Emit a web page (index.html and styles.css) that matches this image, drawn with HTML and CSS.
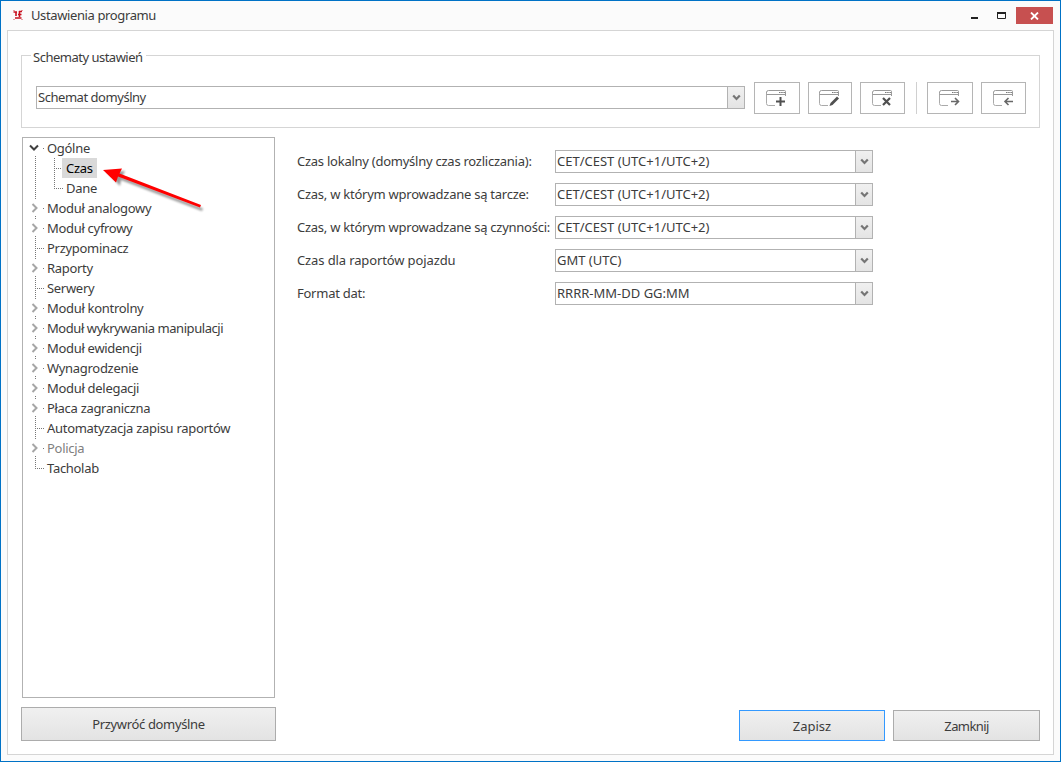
FILE: index.html
```html
<!DOCTYPE html>
<html lang="pl">
<head>
    <meta charset="UTF-8">
    <meta name="viewport" content="width=device-width, initial-scale=1.0">
    <title>Ustawienia programu</title>
    <link rel="stylesheet" href="styles.css">
</head>
<body>
    <svg class="defs" width="0" height="0">
        <symbol id="window" viewBox="0 0 22 18">
            <path d="M9 16.500H2.500Q.5 16.500 .5 14.500V3" fill="none" stroke="#aaa"/>
            <path d="M.5 4V3.500Q.5 1.500 2.500 1.500H18.500Q19.500 1.500 19.500 2.500V7M.5 5.500H19" fill="none" stroke="#999"/>
            <path d="M13 3.500H19" stroke="#777" stroke-dasharray="1.500 .7"/>
        </symbol>
        <symbol id="down" viewBox="0 0 9 8">
            <path d="M1.200 1.500L4.500 5L7.800 1.500" fill="none" stroke="#757575" stroke-width="2.200"/>
        </symbol>
        <symbol id="closed" viewBox="0 0 8 10">
            <path d="M1.500 1L5.500 5L1.500 9" fill="none" stroke="#a6a6a6" stroke-width="2"/>
        </symbol>
    </svg>

    <div class="window">
        <header class="titlebar">
            <svg class="app-icon" width="10" height="10" viewBox="0 0 10 10">
                <path d="M0 .5H2M8 .5H10M0 9.500H2M8 9.500H10" stroke="#e7a0a6"/>
                <path d="M.5 2H4M3 2V6M6.500 1V7M6 1.500H9M5 4.500H8.500M2 8H8.500" fill="none" stroke="#c8101e" stroke-width="1.600"/>
            </svg>
            <h1>Ustawienia programu</h1>
            <div class="controls">
                <svg width="8" height="12" viewBox="0 0 8 12"><path d="M0 11H7" stroke="#222" stroke-width="2"/></svg>
                <svg class="max" width="9" height="7" viewBox="0 0 9 7"><path d="M.5 0V6.500H8.500V0" fill="none" stroke="#222"/><path d="M0 1H9" stroke="#222" stroke-width="2"/></svg>
                <span class="close"><svg width="9" height="8" viewBox="0 0 9 8"><path d="M1 .5L8 7.500M8 .5L1 7.500" stroke="#fff" stroke-width="1.800"/></svg></span>
            </div>
        </header>

        <main class="client">
            <fieldset class="schemes">
                <legend>Schematy ustawień</legend>
                <div class="combo scheme-combo"><span>Schemat domyślny</span><i><svg width="9" height="8"><use href="#down"/></svg></i></div>
                <div class="tools">
                    <button class="tool"><svg width="22" height="18" viewBox="0 0 22 18"><use href="#window"/><path d="M10 12H20V18H10Z" fill="#fff"/><path d="M10 12.500H19M14.500 8V17" stroke="#505050" stroke-width="2"/></svg></button>
                    <button class="tool t2"><svg width="22" height="18" viewBox="0 0 22 18"><use href="#window"/><path d="M10 18L22 6V18Z" fill="#fff"/><path d="M10.500 17L11.500 14L18 7.500L20 9.500L13.500 16Z" fill="#505050"/></svg></button>
                    <button class="tool t3"><svg width="22" height="18" viewBox="0 0 22 18"><use href="#window"/><path d="M10 8H22V18H10Z" fill="#fff"/><path d="M11 9L18 16M18 9L11 16" stroke="#505050" stroke-width="2.200"/></svg></button>
                    <span class="separator"></span>
                    <button class="tool"><svg width="22" height="18" viewBox="0 0 22 18"><use href="#window"/><path d="M11 9H22V18H11Z" fill="#fff"/><path d="M12 12.500H20M16 9L19.500 12.500L16 16" fill="none" stroke="#686868" stroke-width="1.600"/></svg></button>
                    <button class="tool t5"><svg width="22" height="18" viewBox="0 0 22 18"><use href="#window"/><path d="M11 9H22V18H11Z" fill="#fff"/><path d="M20 12.500H12.500M15.500 9L12 12.500L15.500 16" fill="none" stroke="#686868" stroke-width="1.600"/></svg></button>
                </div>
            </fieldset>

            <div class="content">
                <aside class="sidebar">
                    <ul class="tree">
                        <li class="parent first"><b><svg width="10" height="8" viewBox="0 0 10 8"><path d="M1 1.500L5 5.500L9 1.500" fill="none" stroke="#404040" stroke-width="2"/></svg></b><span>Ogólne</span></li>
                        <li class="child"><b></b><em></em><span class="selected">Czas</span></li>
                        <li class="child end"><b></b><em></em><span>Dane</span></li>
                        <li class="parent"><b><svg width="8" height="10"><use href="#closed"/></svg></b><span>Moduł analogowy</span></li>
                        <li class="parent"><b><svg width="8" height="10"><use href="#closed"/></svg></b><span>Moduł cyfrowy</span></li>
                        <li><b></b><span>Przypominacz</span></li>
                        <li class="parent"><b><svg width="8" height="10"><use href="#closed"/></svg></b><span>Raporty</span></li>
                        <li><b></b><span>Serwery</span></li>
                        <li class="parent"><b><svg width="8" height="10"><use href="#closed"/></svg></b><span>Moduł kontrolny</span></li>
                        <li class="parent"><b><svg width="8" height="10"><use href="#closed"/></svg></b><span class="tight">Moduł wykrywania manipulacji</span></li>
                        <li class="parent"><b><svg width="8" height="10"><use href="#closed"/></svg></b><span>Moduł ewidencji</span></li>
                        <li class="parent"><b><svg width="8" height="10"><use href="#closed"/></svg></b><span>Wynagrodzenie</span></li>
                        <li class="parent"><b><svg width="8" height="10"><use href="#closed"/></svg></b><span>Moduł delegacji</span></li>
                        <li class="parent"><b><svg width="8" height="10"><use href="#closed"/></svg></b><span>Płaca zagraniczna</span></li>
                        <li><b></b><span>Automatyzacja zapisu raportów</span></li>
                        <li class="parent disabled"><b><svg width="8" height="10"><use href="#closed"/></svg></b><span>Policja</span></li>
                        <li class="last"><b></b><span>Tacholab</span></li>
                    </ul>
                    <svg class="arrow" width="112" height="52" viewBox="0 0 112 52">
                        <g class="arrow-shadow"><path d="M3 5L21 4L18 10L99 41.500L98 44L17 13L16 19Z"/></g>
                        <path d="M2 5L21 3.500L18.500 8.500L100 40L99 42.500L17 11.500L15 17.500Z" fill="#f00"/>
                    </svg>
                    <button class="btn restore">Przywróć domyślne</button>
                </aside>

                <section class="settings">
                    <div class="form">
                        <label>Czas lokalny (domyślny czas rozliczania):</label>
                        <div class="combo"><span>CET/CEST (UTC+1/UTC+2)</span><i><svg width="9" height="8"><use href="#down"/></svg></i></div>
                        <label>Czas, w którym wprowadzane są tarcze:</label>
                        <div class="combo"><span>CET/CEST (UTC+1/UTC+2)</span><i><svg width="9" height="8"><use href="#down"/></svg></i></div>
                        <label>Czas, w którym wprowadzane są czynności:</label>
                        <div class="combo"><span>CET/CEST (UTC+1/UTC+2)</span><i><svg width="9" height="8"><use href="#down"/></svg></i></div>
                        <label class="loose">Czas dla raportów pojazdu</label>
                        <div class="combo"><span>GMT (UTC)</span><i><svg width="9" height="8"><use href="#down"/></svg></i></div>
                        <label>Format dat:</label>
                        <div class="combo"><span>RRRR-MM-DD GG:MM</span><i><svg width="9" height="8"><use href="#down"/></svg></i></div>
                    </div>
                    <div class="actions">
                        <button class="btn primary">Zapisz</button>
                        <button class="btn cancel">Zamknij</button>
                    </div>
                </section>
            </div>
        </main>
    </div>
</body>
</html>
```
FILE: styles.css
```css
* {
    box-sizing: border-box;
}

body {
    margin: 0;
    font: 13px/20px "Noto Sans", "Open Sans", sans-serif;
    color: #3c3c3c;
    overflow: hidden;
}

button {
    font: inherit;
    color: inherit;
    padding: 0;
}

svg {
    display: block;
    flex: none;
}

.defs {
    display: none;
}

/* Okno */
.window {
    height: 762px;
    width: 1061px;
    padding: 0 6px 6px;
    border: 1px solid #0072c6;
    background: #fbfbfb;
}

.titlebar {
    display: flex;
    height: 29px;
    padding-left: 6px;
}

.app-icon {
    margin-top: 9px;
}

h1 {
    margin: 4px 0 0 8px;
    font-size: 13px;
    font-weight: normal;
    letter-spacing: -.38px;
}

.controls {
    display: flex;
    margin-left: auto;
}

.controls > svg {
    margin: 6px 18px 0 0;
}

.controls > .max {
    margin: 11px 10px 0 0;
}

.close {
    display: flex;
    align-items: center;
    justify-content: center;
    width: 37px;
    height: 17px;
    margin: 6px 1px 0 0;
    background: #c75050;
}

.client {
    height: 725px;
    padding: 14px 13px 13px;
    border: 1px solid #d5d5d5;
    background: #fff;
}

/* Schematy */
.schemes {
    display: flex;
    height: 83px;
    min-width: 0;
    margin: 0;
    padding: 17px 13px 0 14px;
    border: 1px solid #d5d5d5;
}

.schemes legend {
    height: 20px;
    padding: 0 3px 0 2px;
    margin-left: -5px;
    line-height: 24px;
    letter-spacing: -.5px;
}

.combo {
    display: flex;
    height: 23px;
    border: 1px solid #b2b2b2;
    background: #fff;
}

.combo span {
    flex: 1;
    padding-left: 1px;
    white-space: nowrap;
}

.combo i {
    display: flex;
    align-items: center;
    justify-content: center;
    width: 17px;
    border-left: 1px solid #b2b2b2;
    background: linear-gradient(#f0f0f0, #e4e4e4);
}

.scheme-combo {
    width: 709px;
    margin-top: 4px;
    letter-spacing: -.46px;
}

.tools {
    display: flex;
    margin-left: 9px;
}

.tool {
    display: flex;
    align-items: center;
    justify-content: center;
    width: 46px;
    height: 32px;
    border: 1px solid #b5b5b5;
    background: #fff;
}

.t2 {
    width: 44px;
    margin: 0 8px;
}

.t3 {
    width: 45px;
}

.t5 {
    width: 45px;
    margin-left: 8px;
}

.separator {
    width: 1px;
    height: 32px;
    margin: 0 10px 0 11px;
    background: #d0d0d0;
}

.content {
    display: flex;
    height: 613px;
    padding-top: 9px;
}

/* Drzewo */
.sidebar {
    position: relative;
    width: 255px;
}

.tree {
    width: 253px;
    height: 561px;
    margin: 0 0 0 1px;
    padding: 0;
    list-style: none;
    border: 1px solid #b2b2b2;
    letter-spacing: -.3px;
}

.tree li {
    display: flex;
    height: 20px;
    white-space: nowrap;
}

.tree b {
    width: 9px;
    height: 20px;
    margin-left: 12px;
    background:
        repeating-linear-gradient(90deg, #777 0 1px, transparent 1px 2px) 0 10px / 9px 1px no-repeat,
        repeating-linear-gradient(#777 0 1px, transparent 1px 2px) 0 0 / 1px 20px no-repeat;
}

.tree .parent b {
    background:
        linear-gradient(#777, #777) 8px 10px / 1px 1px no-repeat,
        linear-gradient(#777, #777) 0 0 / 1px 1px no-repeat,
        linear-gradient(#777, #777) 0 18px / 1px 1px no-repeat;
}

.tree .first b {
    background:
        linear-gradient(#777, #777) 8px 10px / 1px 1px no-repeat,
        linear-gradient(#777, #777) 0 18px / 1px 1px no-repeat;
}

.tree .child b {
    background: repeating-linear-gradient(#777 0 1px, transparent 1px 2px) 0 0 / 1px 20px no-repeat;
}

.tree .last b {
    background:
        repeating-linear-gradient(90deg, #777 0 1px, transparent 1px 2px) 0 10px / 9px 1px no-repeat,
        repeating-linear-gradient(#777 0 1px, transparent 1px 2px) 0 0 / 1px 11px no-repeat;
}

.tree b svg {
    margin: 5px 0 0 -4px;
}

.tree .first svg {
    margin: 6px 0 0 -6px;
}

.tree span {
    padding-left: 3px;
}

.tree .tight {
    letter-spacing: -.43px;
}

.tree em {
    width: 9px;
    margin-left: 10px;
    background:
        repeating-linear-gradient(90deg, #777 0 1px, transparent 1px 2px) 0 10px / 9px 1px no-repeat,
        repeating-linear-gradient(#777 0 1px, transparent 1px 2px) 0 0 / 1px 20px no-repeat;
}

.tree .end em {
    background:
        repeating-linear-gradient(90deg, #777 0 1px, transparent 1px 2px) 0 10px / 9px 1px no-repeat,
        repeating-linear-gradient(#777 0 1px, transparent 1px 2px) 0 0 / 1px 11px no-repeat;
}

.tree .child span {
    margin-left: -1px;
    padding: 0 4px;
}

.tree .selected {
    color: #000;
    background: #d9d9d9;
}

.tree .disabled {
    color: #808080;
}

/* Strzałka nad drzewem */
.arrow {
    position: absolute;
    left: 80px;
    top: 28px;
}

.arrow-shadow {
    fill: #000;
    opacity: .4;
    filter: blur(1.2px);
    transform: translate(3px, 2px);
}

.btn {
    height: 31px;
    width: 147px;
    border: 1px solid #acacac;
    background: linear-gradient(#f0f0f0, #e3e3e3);
    line-height: 18px;
}

.restore {
    display: block;
    width: 255px;
    height: 34px;
    margin-top: 9px;
    letter-spacing: -.35px;
}

/* Formularz */
.settings {
    display: flex;
    flex: 1;
    flex-direction: column;
    justify-content: space-between;
}

.form {
    display: grid;
    grid-template-columns: 258px 318px;
    row-gap: 10px;
    padding: 13px 0 0 21px;
}

.form label {
    white-space: nowrap;
    padding-top: 1px;
    letter-spacing: -.25px;
}

.form .loose {
    letter-spacing: -.12px;
}

.actions {
    display: flex;
    gap: 8px;
    justify-content: flex-end;
}

.cancel {
    letter-spacing: -.6px;
}

.primary {
    width: 146px;
    border-color: #3399ff;
}
```
